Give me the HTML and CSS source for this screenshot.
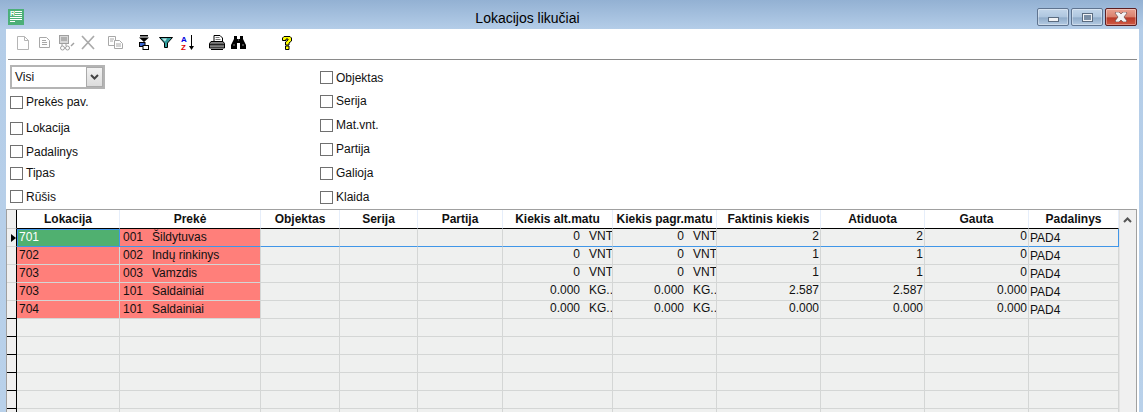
FILE: index.html
```html
<!DOCTYPE html>
<html lang="lt">
<head>
<meta charset="utf-8">
<title>Lokacijos likučiai</title>
<link rel="stylesheet" href="styles.css">
</head>
<body>
<div class="window">
  <header class="titlebar">
    <svg class="app-icon" width="16" height="16" viewBox="0 0 16 16"><rect width="16" height="16" fill="#4caf78"/><text x="2" y="7" class="r">R</text><path d="M7 2h7v1H7zM7 4h7v1H7zM7 6h7v1H7zM2 8h12v1H2zM2 10h12v1H2zM2 12h5v1H2z" fill="#fff"/></svg>
    <div class="title">Lokacijos likučiai</div>
    <div class="win-buttons">
      <div class="win-btn"><span class="glyph-min"></span></div>
      <div class="win-btn"><span class="glyph-max"></span></div>
      <div class="win-btn close"><svg width="14" height="10" viewBox="0 0 14 10"><path d="M2 0h3l2 2 2-2h3l1 1-3 4 3 4-1 1H9L7 8 5 10H2L1 9l3-4-3-4z" fill="#f4f4f4" stroke="#5a3a3a" stroke-width=".6"/></svg></div>
    </div>
  </header>
  <main class="client">
    <nav class="toolbar">
      <svg class="ti i1" width="12" height="14" viewBox="0 0 12 14"><path d="M.5.5h7l4 4v9H.5zM7.500.5v4h4" fill="#fff" stroke="#b5b5b5"/></svg>
      <svg class="ti i2" width="11" height="11" viewBox="0 0 11 11"><path d="M.5.5h7l3 3v7H.5z" fill="#fff" stroke="#a8a8a8"/><path d="M3 3.500h4M3 5.500h5M3 7.500h5" stroke="#a8a8a8"/></svg>
      <svg class="ti i3" width="16" height="16" viewBox="0 0 16 16"><rect x=".5" y=".5" width="9" height="8" fill="#d8d8d8" stroke="#a0a0a0"/><path d="M2 3h6M2 5h6" stroke="#888"/><path d="M3 8v3M7 8v3" stroke="#a0a0a0"/><circle cx="3.500" cy="13" r="2" fill="none" stroke="#a0a0a0"/><circle cx="8.500" cy="13" r="2" fill="none" stroke="#a0a0a0"/><path d="M12 11l3-3" stroke="#a0a0a0" stroke-width="1.500"/></svg>
      <svg class="ti i4" width="12" height="13" viewBox="0 0 12 13"><path d="M0 0l12 13M12 0L0 13" stroke="#aaa" stroke-width="1.700"/></svg>
      <svg class="ti i5" width="15" height="13" viewBox="0 0 15 13"><path d="M.5.5h7v9h-7z" fill="#fff" stroke="#a8a8a8"/><path d="M6.500 4.500h5l3 3v5h-8z" fill="#fff" stroke="#a8a8a8"/><path d="M2 3h4M2 5h3M8 8h5M8 10h5" stroke="#a8a8a8"/></svg>
      <svg class="ti i6" width="10" height="15" viewBox="0 0 10 15"><path d="M1 0h8v1.500H1zM0 2.500h10L5 7z" fill="#000"/><rect x=".5" y="7.500" width="5.500" height="4" fill="#3a66d0" stroke="#000"/><rect x="4" y="10.500" width="5.500" height="4" fill="#fff" stroke="#000"/></svg>
      <svg class="ti i7" width="14" height="11" viewBox="0 0 14 11"><path d="M.5.500h13L8.500 6v4.500h-3V6z" fill="#2e9c9c" stroke="#000"/><path d="M3 1.500h5L6 4.500z" fill="#c5e8e8"/></svg>
      <svg class="ti i8" width="14" height="16" viewBox="0 0 14 16"><text x="0" y="7" class="az a">A</text><text x="0" y="15" class="az z">Z</text><path d="M10.500 0v11" stroke="#000"/><path d="M8 11h5l-2.500 4z" fill="#000"/></svg>
      <svg class="ti i9" width="16" height="15" viewBox="0 0 16 15"><path d="M5 .5h6l2.500 2.500v4H5z" fill="#fff" stroke="#000"/><path d="M6.500 2.500h4M6.500 4.500h5" stroke="#777"/><path d="M2 6.500h12l1.500 2v4.500h-15V8.500z" fill="#808080" stroke="#000"/><path d="M1 9.500h14" stroke="#222" stroke-width="1.500"/><path d="M2 14.500h12" stroke="#000"/></svg>
      <svg class="ti i10" width="15" height="13" viewBox="0 0 15 13"><path d="M3 0h3v3h3V0h3v3l3 6v4H9V7H6v6H0V9l3-6z" fill="#000"/><path d="M2 9h2M11 9h2M7 4h1" stroke="#888"/></svg>
      <svg class="ti i11" width="10" height="14" viewBox="0 0 10 14"><path d="M2 .5h6l1.500 1.500v3L7 7v2H3.500V6l2.500-2V3H4v1.500H.5V2zM3.500 10h3.500v3.500H3.500z" fill="#ffff00" stroke="#000"/></svg>
    </nav>
    <section class="filters">
      <div class="filter-col left">
        <div class="select"><span class="select-value">Visi</span><span class="select-btn"><svg width="9" height="6" viewBox="0 0 9 6"><path d="M1 1l3.500 3.500L8 1" fill="none" stroke="#444" stroke-width="2"/></svg></span></div>
        <label class="check"><span class="box"></span>Prekės pav.</label>
        <label class="check"><span class="box"></span>Lokacija</label>
        <label class="check"><span class="box"></span>Padalinys</label>
        <label class="check"><span class="box"></span>Tipas</label>
        <label class="check"><span class="box"></span>Rūšis</label>
      </div>
      <div class="filter-col right">
        <label class="check"><span class="box"></span>Objektas</label>
        <label class="check"><span class="box"></span>Serija</label>
        <label class="check"><span class="box"></span>Mat.vnt.</label>
        <label class="check"><span class="box"></span>Partija</label>
        <label class="check"><span class="box"></span>Galioja</label>
        <label class="check"><span class="box"></span>Klaida</label>
      </div>
    </section>
    <section class="table-wrap">
      <div class="table">
        <div class="row head"><div class="ind"></div><div>Lokacija</div><div>Prekė</div><div>Objektas</div><div>Serija</div><div>Partija</div><div>Kiekis alt.matu</div><div>Kiekis pagr.matu</div><div>Faktinis kiekis</div><div>Atiduota</div><div>Gauta</div><div>Padalinys</div></div>
        <div class="row current data"><div class="ind"><span class="arrow"></span></div><div class="green">701</div><div class="red"><span class="code">001</span>Šildytuvas</div><div></div><div></div><div></div><div class="qty"><span class="num">0</span><span class="unit">VNT</span></div><div class="qty"><span class="num">0</span><span class="unit">VNT</span></div><div class="n">2</div><div class="n">2</div><div class="n">0</div><div class="pad">PAD4</div></div>
        <div class="row data"><div class="ind"></div><div class="red">702</div><div class="red"><span class="code">002</span>Indų rinkinys</div><div></div><div></div><div></div><div class="qty"><span class="num">0</span><span class="unit">VNT</span></div><div class="qty"><span class="num">0</span><span class="unit">VNT</span></div><div class="n">1</div><div class="n">1</div><div class="n">0</div><div class="pad">PAD4</div></div>
        <div class="row data"><div class="ind"></div><div class="red">703</div><div class="red"><span class="code">003</span>Vamzdis</div><div></div><div></div><div></div><div class="qty"><span class="num">0</span><span class="unit">VNT</span></div><div class="qty"><span class="num">0</span><span class="unit">VNT</span></div><div class="n">1</div><div class="n">1</div><div class="n">0</div><div class="pad">PAD4</div></div>
        <div class="row data"><div class="ind"></div><div class="red">703</div><div class="red"><span class="code">101</span>Saldainiai</div><div></div><div></div><div></div><div class="qty"><span class="num">0.000</span><span class="unit">KG..</span></div><div class="qty"><span class="num">0.000</span><span class="unit">KG..</span></div><div class="n">2.587</div><div class="n">2.587</div><div class="n">0.000</div><div class="pad">PAD4</div></div>
        <div class="row"><div class="ind"></div><div class="red">704</div><div class="red"><span class="code">101</span>Saldainiai</div><div></div><div></div><div></div><div class="qty"><span class="num">0.000</span><span class="unit">KG..</span></div><div class="qty"><span class="num">0.000</span><span class="unit">KG..</span></div><div class="n">0.000</div><div class="n">0.000</div><div class="n">0.000</div><div class="pad">PAD4</div></div>
        <div class="row"><div class="ind"></div><div></div><div></div><div></div><div></div><div></div><div></div><div></div><div></div><div></div><div></div><div></div></div>
        <div class="row"><div class="ind"></div><div></div><div></div><div></div><div></div><div></div><div></div><div></div><div></div><div></div><div></div><div></div></div>
        <div class="row"><div class="ind"></div><div></div><div></div><div></div><div></div><div></div><div></div><div></div><div></div><div></div><div></div><div></div></div>
        <div class="row"><div class="ind"></div><div></div><div></div><div></div><div></div><div></div><div></div><div></div><div></div><div></div><div></div><div></div></div>
        <div class="row"><div class="ind"></div><div></div><div></div><div></div><div></div><div></div><div></div><div></div><div></div><div></div><div></div><div></div></div>
        <div class="row"><div class="ind"></div><div></div><div></div><div></div><div></div><div></div><div></div><div></div><div></div><div></div><div></div><div></div></div>
      </div>
      <aside class="scrollbar"><svg width="9" height="6" viewBox="0 0 9 6"><path d="M1 5l3.500-3.500L8 5" fill="none" stroke="#555" stroke-width="2"/></svg></aside>
    </section>
  </main>
</div>
</body>
</html>
```
FILE: styles.css
```css
* { box-sizing: border-box; }
html, body { margin: 0; height: 100%; overflow: hidden; }
body { font: 12px "Liberation Sans", Arial, sans-serif; color: #111; }
.window {
  width: 1143px; height: 412px; display: flex; flex-direction: column;
  background: linear-gradient(#93b1d3 0, #b4cde8 29px, #b9d1ea 100%);
  padding: 0 4px 0 6px;
}
.titlebar { height: 29px; flex: none; display: flex; align-items: flex-start; margin-right: -2px; margin-left: 2px; }
.app-icon { margin-top: 9px; }
.r { font: bold 7px "Liberation Sans", sans-serif; fill: #fff; }
.title { flex: 1; text-align: center; font-size: 14px; line-height: 18px; margin-top: 9px; padding-right: 6px; color: #000; }
.win-buttons { display: flex; gap: 2px; margin-top: 8px; margin-right: 4px; }
.win-btn {
  width: 32px; height: 18px; border: 1px solid #5f7490; border-radius: 2px;
  background: linear-gradient(#c3d6ea 0, #aec6df 50%, #8fabc9 55%, #b4cbe3 100%);
  box-shadow: inset 0 0 0 1px rgba(255,255,255,.35);
  display: flex; align-items: center; justify-content: center;
}
.win-btn.close { border-color: #5c1f22; background: linear-gradient(#e9a190 0, #d9806c 50%, #b93a28 55%, #cf5a45 100%); }
.glyph-min { width: 11px; height: 5px; margin-top: 4px; background: #f0f2f5; border: 1px solid #5a6b80; }
.glyph-max { width: 11px; height: 9px; background: #7b8fa6; border: 2px solid #f0f2f5; outline: 1px solid #5a6b80; outline-offset: -1px; }
.client { flex: 1; min-height: 0; background: #fff; display: flex; flex-direction: column; }
.toolbar { height: 31px; flex: none; margin: 0 2px; border-bottom: 1px solid #8a8a8a; display: flex; align-items: flex-start; padding-left: 9px; padding-top: 6px; }
.ti { flex: none; display: block; overflow: visible; }
.i1 { margin-top: 1px; }
.i2 { margin: 2px 0 0 10px; }
.i3 { margin: 0 0 0 9px; }
.i4 { margin: 1px 0 0 7px; }
.i5 { margin: 1px 0 0 14px; }
.i6 { margin: 0 0 0 16px; }
.i7 { margin: 2px 0 0 10px; }
.i8 { margin: 0 0 0 8px; }
.i9 { margin: 0 0 0 14px; }
.i10 { margin: 1px 0 0 6px; }
.i11 { margin: 1px 0 0 36px; }
.az { font: bold 8px "Liberation Sans", sans-serif; }
.a { fill: #0000e0; }
.z { fill: #e00000; }
.filters { flex: none; height: 149px; padding: 5px 0 0 4px; display: flex; gap: 215px; }
.filter-col { display: grid; width: 95px; }
.left { grid-template-rows: 24px 26px 26px 21px 22px 25px; }
.right { grid-template-rows: 25px 22px 26px 22px 26px 22px; }
.select { width: 95px; height: 24px; border: 2px solid #b4b4b4; display: flex; align-items: center; justify-content: space-between; background: #fff; }
.select-value { padding-left: 3px; }
.select-btn { width: 17px; height: 20px; border: 1px solid #aaa; background: linear-gradient(#f2f2f2, #dcdcdc); display: flex; align-items: center; justify-content: center; }
.check { display: flex; align-items: center; gap: 3px; white-space: nowrap; }
.box { width: 13px; height: 13px; border: 1px solid #707070; background: #fff; flex: none; }
.table-wrap { flex: 1; min-height: 0; display: flex; border: 1px solid #a0a0a0; border-bottom: 0; overflow: hidden; margin-right: 2px; background: #f0f0f0; }
.table { width: 1112px; flex: none; }
.scrollbar { flex: 1; background: #f0f0f0; border-left: 1px solid #e4e4e4; padding: 7px 0 0 3px; }
.scrollbar svg { display: block; }
.row { display: grid; height: 18px; grid-template-columns: 10px 103px 141px 79px 78px 85px 110px 104px 104px 104px 104px 90px; }
.row > div { border-right: 1px solid #d4d6d5; border-bottom: 1px solid #d4d6d5; background: #eff0ef; padding: 0 2px; line-height: 17px; white-space: nowrap; overflow: hidden; }
.row > .ind { background: #f0f0f0; border-right: 1px solid #000; border-bottom: 1px solid #000; padding: 0; position: relative; }
.data > .ind { border-bottom-color: #d4d6d5; }
.head { height: 19px; }
.head > div { background: #fff; font-weight: bold; text-align: center; color: #111; border-right: 1px solid #e6eefa; border-bottom: 1px solid #000; line-height: 18px; }
.head > .ind { background: #f0f0f0; border-right: 1px solid #000; border-bottom-color: #ccc; }
.row > .red { background: #ff7f7a; }
.row > .green { background: #50b070; color: #fff; }
.code { display: inline-block; width: 30px; padding-left: 1px; }
.row > .n { text-align: right; line-height: 15px; padding-right: 1px; }
.row > .qty { display: flex; justify-content: flex-end; line-height: 15px; padding-right: 0; }
.num { flex: 1; text-align: right; }
.unit { width: 32px; padding-left: 9px; }
.row > .pad { padding-left: 1px; line-height: 18px; }
.current > div { border-bottom-color: #3f96e8; }
.current > .green { outline: 1px solid #3f96e8; outline-offset: -1px; }
.current > .pad { border-right-color: #3f96e8; }
.arrow { position: absolute; left: 4px; top: 5px; width: 0; height: 0; border-left: 5px solid #000; border-top: 4px solid transparent; border-bottom: 4px solid transparent; }
```
